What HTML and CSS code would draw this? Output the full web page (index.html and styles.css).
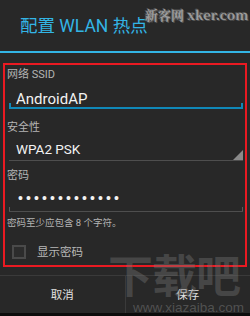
FILE: index.html
```html
<!DOCTYPE html>
<html lang="zh-CN">
<head>
<meta charset="utf-8">
<title>配置 WLAN 热点</title>
<link rel="stylesheet" href="styles.css">
</head>
<body>
<div class="screen">
  <div class="header"><span class="title">配置 WLAN 热点</span></div>
  <div class="box">
    <div class="label first">网络 SSID</div>
    <div class="field edit active">AndroidAP</div>
    <div class="label sec">安全性</div>
    <div class="field spinner">WPA2 PSK</div>
    <div class="label pw">密码</div>
    <div class="field edit dots">•••••••••••••</div>
    <div class="hint">密码至少应包含 8 个字符。</div>
    <div class="check-row"><span class="checkbox"></span><span class="check-label">显示密码</span></div>
  </div>
  <div class="buttons">
    <div class="btn">取消</div>
    <div class="btn">保存</div>
  </div>
  <div class="nav"></div>
  <div class="wm-top">新客网 xker.com</div>
  <div class="wm-bottom"><div class="wm-big">下载吧</div><div class="wm-url">www.xiazaiba.com</div></div>
</div>
</body>
</html>
```
FILE: styles.css
```css
html, body {
  margin: 0;
  padding: 0;
  background: #282828;
}
.screen {
  position: relative;
  width: 250px;
  height: 316px;
  overflow: hidden;
  background: #282828;
  font-family: Roboto, "Noto Sans CJK SC", sans-serif;
}
.header {
  height: 51px;
  border-bottom: 2px solid #33b5e5;
  display: flex;
  align-items: center;
  padding-left: 20px;
  box-sizing: content-box;
}
.title {
  color: #33b5e5;
  font-size: 17.5px;
  line-height: 20px;
}
.box {
  margin: 10px 3px 0 3px;
  height: 204px;
  box-sizing: border-box;
  border: 2px solid #ea1a22;
  padding: 0 2px 0 4px;
}
.label {
  color: #b4b4b4;
  font-size: 11px;
  line-height: 14px;
  margin-left: -2px;
}
.label.first { margin-top: 3px; }
.label.sec { margin-top: 12px; }
.label.pw { margin-top: 8px; }
.field {
  position: relative;
  color: #f2f2f2;
  padding-left: 7px;
}
.field.edit.active {
  margin-top: 9px;
  font-size: 15px;
  line-height: 16px;
  border-bottom: 2px solid #1088b8;
}
.field.edit::before,
.field.edit::after {
  content: "";
  position: absolute;
  bottom: 0;
  width: 1px;
  height: 4px;
  background: #5a5a5a;
}
.field.edit.active::before,
.field.edit.active::after {
  background: #1088b8;
  width: 2px;
}
.field.edit::before { left: 0; }
.field.edit::after { right: 0; }
.field.spinner {
  margin-top: 6px;
  font-size: 13.5px;
  line-height: 16px;
  padding-bottom: 3px;
  border-bottom: 1px solid #4e4e4e;
}
.field.spinner::after {
  content: "";
  position: absolute;
  right: 0;
  bottom: 0;
  width: 0;
  height: 0;
  border-left: 10px solid transparent;
  border-bottom: 10px solid #8a8a8a;
}
.field.dots {
  margin-top: 7px;
  font-family: "Liberation Sans", sans-serif;
  font-size: 14px;
  line-height: 16px;
  letter-spacing: 3.1px;
  padding-left: 9px;
  padding-bottom: 5px;
  border-bottom: 1px solid #4e4e4e;
}
.hint {
  margin-top: 5px;
  margin-left: -2px;
  color: #b4b4b4;
  font-size: 9.5px;
  line-height: 12px;
}
.check-row {
  display: flex;
  align-items: center;
  margin-top: 16px;
  padding-left: 3px;
  gap: 11px;
}
.checkbox {
  width: 10px;
  height: 10px;
  border: 2px solid #4a4a4a;
  background: #2c2c2c;
}
.check-label {
  color: #b8b8b8;
  font-size: 11.5px;
  line-height: 14px;
}
.buttons {
  margin-top: 8px;
  border-top: 1px solid #3a3a3a;
  display: flex;
  height: 37px;
}
.btn {
  flex: 1;
  display: flex;
  align-items: center;
  justify-content: center;
  color: #e2e2e2;
  font-size: 11.5px;
  line-height: 14px;
}
.btn + .btn {
  border-left: 1px solid #3a3a3a;
}
.nav {
  height: 3px;
  background: #0c0c0c;
}
.wm-top {
  position: absolute;
  top: 7px;
  left: 145px;
  color: #9c9c9c;
  font-family: "Noto Serif CJK SC", "Liberation Serif", "Noto Sans CJK SC", serif;
  font-weight: bold;
  font-size: 13px;
  line-height: 16px;
  white-space: nowrap;
  text-shadow: 0 0 1px #555, 1px 1px 0 #555, -1px -1px 0 #555;
}
.wm-bottom {
  position: absolute;
  top: 247px;
  left: 108px;
  width: 142px;
  pointer-events: none;
}
.wm-big {
  color: rgba(120, 120, 120, 0.38);
  font-family: "Noto Sans CJK SC", sans-serif;
  font-weight: bold;
  font-size: 45px;
  line-height: 54px;
  letter-spacing: -1px;
  white-space: nowrap;
}
.wm-url {
  color: rgba(140, 140, 140, 0.42);
  font-family: "Liberation Sans", sans-serif;
  font-size: 13.5px;
  line-height: 14px;
  margin-left: 25px;
  white-space: nowrap;
}
```
